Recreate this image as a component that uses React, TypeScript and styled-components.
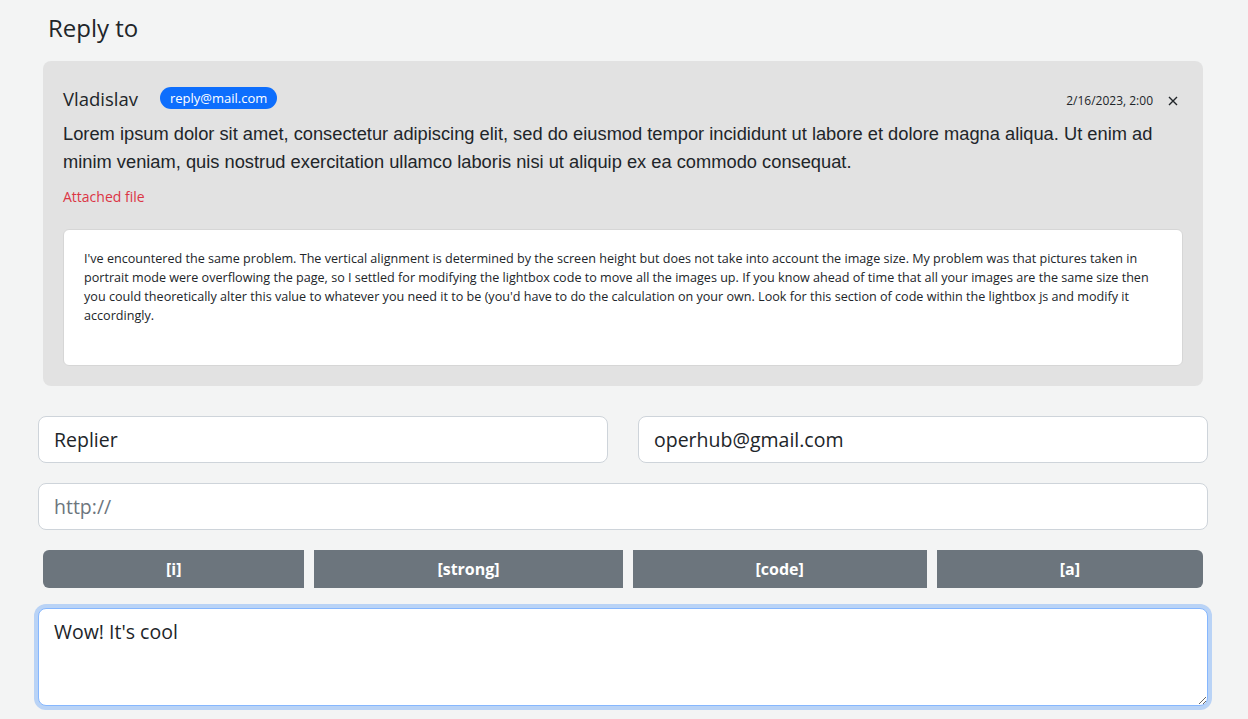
import styled, { createGlobalStyle } from "styled-components";

const GlobalStyle = createGlobalStyle`
  body {
    margin: 0;
    background: #f3f4f4;
    color: #212529;
    font-family: "Open Sans", "Noto Sans", sans-serif;
  }
  * {
    box-sizing: border-box;
  }
`;

const Page = styled.div`
  width: 1170px;
  margin-left: 38px;
  padding-top: 13px;
  padding-bottom: 20px;
`;

const Title = styled.h2`
  margin: 0;
  padding-left: 10px;
  font-size: 24px;
  font-weight: 400;
  line-height: 30px;
`;

const Card = styled.div`
  margin: 18px 5px 0;
  padding: 20px;
  background: #e2e2e2;
  border-radius: 8px;
`;

const CardHead = styled.div`
  display: flex;
  align-items: center;
  height: 34px;
  margin-bottom: 5px;
`;

const Author = styled.span`
  font-size: 18.5px;
  margin-right: 22px;
`;

const Badge = styled.span`
  display: inline-flex;
  align-items: center;
  height: 22px;
  padding: 0 10px;
  border-radius: 11px;
  background: #0d6efd;
  color: #fff;
  font-size: 13px;
`;

const Date = styled.span`
  margin-left: auto;
  font-size: 12px;
  margin-top: 5px;
`;

const Close = styled.button`
  border: 0;
  background: none;
  padding: 0;
  margin: 5px 0 0 10px;
  width: 20px;
  height: 20px;
  display: flex;
  align-items: center;
  justify-content: center;
  cursor: pointer;
`;

const Message = styled.p`
  margin: 0;
  font-family: "Liberation Sans", Arial, sans-serif;
  font-size: 18.3px;
  line-height: 28px;
`;

const Attached = styled.a`
  display: block;
  margin-top: 10px;
  color: #dc3545;
  font-size: 14px;
  line-height: 21px;
  text-decoration: none;
`;

const Quote = styled.div`
  margin-top: 22px;
  padding: 19px 20px 40px;
  background: #fff;
  border: 1px solid #d6d6d6;
  border-radius: 6px;
  font-size: 12.6px;
  line-height: 19px;
`;

const Row = styled.div`
  display: grid;
  grid-template-columns: 1fr 1fr;
  gap: 30px;
  margin-top: 30px;
`;

const Input = styled.input`
  display: block;
  width: 100%;
  height: 47px;
  padding: 8px 15px;
  font-family: inherit;
  font-size: 19.5px;
  color: #212529;
  background: #fff;
  border: 1px solid #ced4da;
  border-radius: 8px;
  outline: none;

  &::placeholder {
    color: #6c757d;
  }
`;

const UrlInput = styled(Input)`
  margin-top: 20px;
`;

const Toolbar = styled.div`
  display: flex;
  gap: 10px;
  margin: 20px 5px 0;
`;

const ToolButton = styled.button`
  flex: 1 1 auto;
  height: 38px;
  border: 0;
  border-radius: 0;
  background: #6c757d;
  color: #fff;
  font-family: inherit;
  font-weight: 700;
  font-size: 16px;
  cursor: pointer;

  &:first-child {
    border-radius: 6px 0 0 6px;
  }
  &:last-child {
    border-radius: 0 6px 6px 0;
  }
`;

const Editor = styled.textarea`
  display: block;
  width: 100%;
  height: 98px;
  margin-top: 20px;
  padding: 8px 15px;
  font-family: inherit;
  font-size: 19.5px;
  line-height: 30px;
  color: #212529;
  background: #fff;
  border: 1px solid #86b7fe;
  border-radius: 8px;
  box-shadow: 0 0 0 4px rgba(13, 110, 253, 0.25);
  outline: none;
  resize: vertical;
`;

const tools = ["[i]", "[strong]", "[code]", "[a]"];

const App = () => (
  <>
    <GlobalStyle />
    <Page>
      <Title>Reply to</Title>
      <Card>
        <CardHead>
          <Author>Vladislav</Author>
          <Badge>reply@mail.com</Badge>
          <Date>2/16/2023, 2:00</Date>
          <Close aria-label="close">
            <svg width="10" height="10" viewBox="0 0 10 10">
              <path d="M1 1L9 9M9 1L1 9" stroke="#212529" strokeWidth="1.4" />
            </svg>
          </Close>
        </CardHead>
        <Message>
          Lorem ipsum dolor sit amet, consectetur adipiscing elit, sed do
          eiusmod tempor incididunt ut labore et dolore magna aliqua. Ut enim ad
          minim veniam, quis nostrud exercitation ullamco laboris nisi ut aliquip
          ex ea commodo consequat.
        </Message>
        <Attached href="#">Attached file</Attached>
        <Quote>
          I've encountered the same problem. The vertical alignment is
          determined by the screen height but does not take into account the
          image size. My problem was that pictures taken in portrait mode were
          overflowing the page, so I settled for modifying the lightbox code to
          move all the images up. If you know ahead of time that all your images
          are the same size then you could theoretically alter this value to
          whatever you need it to be (you'd have to do the calculation on your
          own. Look for this section of code within the lightbox js and modify it
          accordingly.
        </Quote>
      </Card>
      <Row>
        <Input defaultValue="Replier" />
        <Input defaultValue="operhub@gmail.com" />
      </Row>
      <UrlInput placeholder="http://" />
      <Toolbar>
        {tools.map((t) => (
          <ToolButton key={t}>{t}</ToolButton>
        ))}
      </Toolbar>
      <Editor defaultValue="Wow! It's cool" />
    </Page>
  </>
);

export default App;
